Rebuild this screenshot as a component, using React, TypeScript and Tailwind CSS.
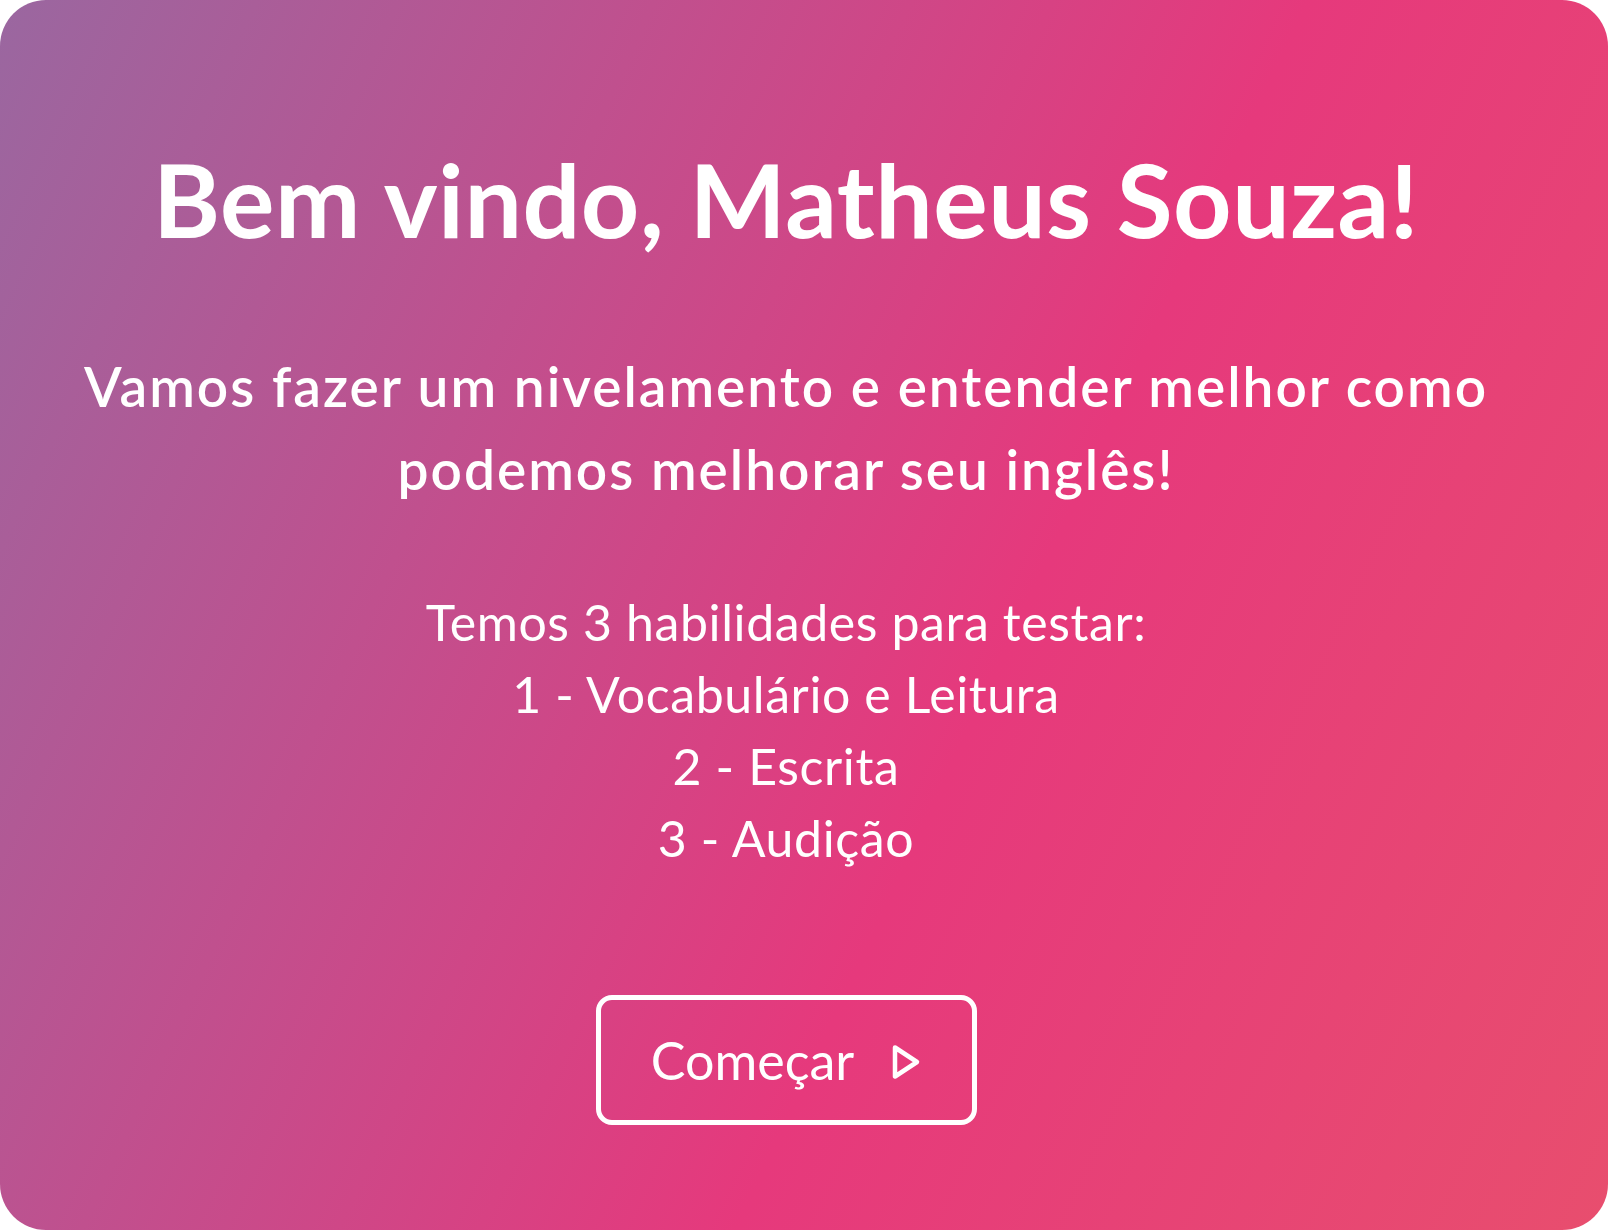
export default function App() {
  return (
    <div className="w-[1608px] h-[1230px] bg-white">
      <div
        className="w-full h-full rounded-[46px] overflow-hidden flex flex-col items-center pr-[36px] text-white text-center bg-[linear-gradient(115deg,#9a67a0_0%,#e6397c_60%,#e84e6e_100%)]"
        style={{ fontFamily: "Lato, 'Open Sans', sans-serif" }}
      >
        {/* Title */}
        <h1 className="mt-[137px] text-[102px] leading-[124px] font-bold tracking-[0.5px]">
          Bem vindo, Matheus Souza!
        </h1>

        {/* Intro */}
        <p className="mt-[84px] w-[1460px] text-[55px] leading-[83px] font-semibold tracking-[2px]">
          Vamos fazer um nivelamento e entender melhor como podemos melhorar seu
          inglês!
        </p>

        {/* Skills */}
        <div className="mt-[75px] flex flex-col text-[50px] leading-[72px] font-normal tracking-[0.6px]">
          <span>Temos 3 habilidades para testar:</span>
          <span>1 - Vocabulário e Leitura</span>
          <span>2 - Escrita</span>
          <span>3 - Audição</span>
        </div>

        {/* Start button */}
        <button className="mt-[121px] w-[381px] h-[130px] border-[5px] border-white rounded-[16px] flex items-center justify-center gap-[37px] text-[52px] font-normal">
          <span>Começar</span>
          <svg
            width="30"
            height="36"
            viewBox="0 0 30 36"
            fill="none"
            stroke="currentColor"
            strokeWidth="4.5"
            strokeLinejoin="round"
            className="mt-[4px]"
          >
            <path d="M4 3.5 L26 18 L4 32.5 Z" />
          </svg>
        </button>
      </div>
    </div>
  );
}
